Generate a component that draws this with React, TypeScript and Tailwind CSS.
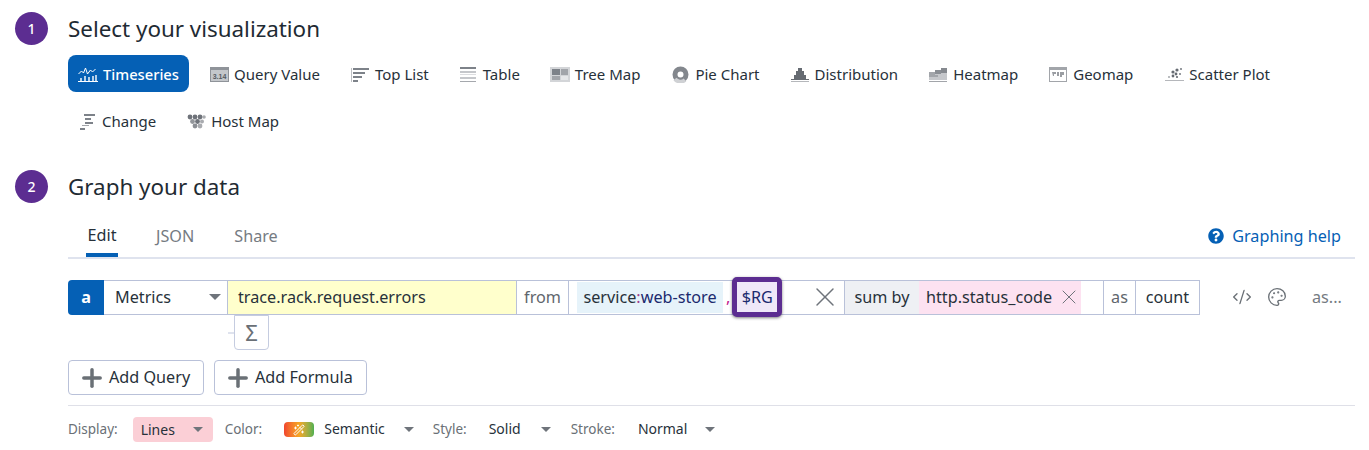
import { Plus, X, CodeXml, Palette, WandSparkles } from "lucide-react";
import { FaQuestionCircle } from "react-icons/fa";

const gray = "#7d8289";

function TimeseriesIcon() {
  return (
    <svg width="20" height="15" viewBox="0 0 20 15" fill="none">
      <path d="M0.5 7l3-3 2 2 2-5 2 6 3-4 2 2 3-3" stroke="currentColor" strokeWidth="1" />
      <path d="M0 14.5h20" stroke="currentColor" strokeWidth="1" />
      <path d="M2 11h2v3H2zM6 9h2v5H6zM10 10h2v4h-2zM14 9h2v5h-2zM17 8h2v6h-2z" fill="currentColor" opacity="0.7" />
    </svg>
  );
}

function QueryValueIcon() {
  return (
    <svg width="19" height="15" viewBox="0 0 19 15">
      <rect width="19" height="15" fill="#8f9399" />
      <rect x="1" y="3" width="17" height="11" fill="#c4c7cb" />
      <text x="9.5" y="12" textAnchor="middle" fontSize="7" fontWeight="700" fill="#555b62" fontFamily="Liberation Sans, sans-serif">3.14</text>
    </svg>
  );
}

function TopListIcon() {
  return (
    <svg width="18" height="14" viewBox="0 0 18 14" fill={gray}>
      <rect x="2" y="0" width="16" height="2" />
      <rect x="2" y="4" width="12" height="2" />
      <rect x="2" y="8" width="9" height="2" />
      <rect x="2" y="12" width="5" height="2" />
      <rect x="0" y="0" width="1" height="14" opacity="0.5" />
    </svg>
  );
}

function TableIcon() {
  return (
    <svg width="16" height="16" viewBox="0 0 16 16" fill="#c5c7cb">
      <rect y="0" width="16" height="2" fill="#7d8289" />
      <rect y="4" width="16" height="2" />
      <rect y="7" width="16" height="1" opacity="0.6" />
      <rect y="10" width="16" height="2" />
      <rect y="14" width="16" height="1" fill="#a5a8ad" />
    </svg>
  );
}

function TreeMapIcon() {
  return (
    <svg width="20" height="15" viewBox="0 0 20 15">
      <rect width="20" height="15" fill="#d3d5d8" />
      <rect x="2" y="2" width="8" height="6" fill="#7d8289" />
      <rect x="11" y="2" width="7" height="6" fill="#a2a5aa" />
      <rect x="2" y="9" width="8" height="4" fill="#a2a5aa" />
      <rect x="11" y="9" width="7" height="4" fill="#e6e7e9" />
    </svg>
  );
}

function PieIcon() {
  return (
    <svg width="17" height="17" viewBox="0 0 17 17" fill="none">
      <circle cx="8.5" cy="8.5" r="5.5" stroke="#83878d" strokeWidth="5" />
      <path d="M13 14A7 7 0 0 1 3 13" stroke="#cfd1d4" strokeWidth="4" />
    </svg>
  );
}

function DistributionIcon() {
  return (
    <svg width="18" height="15" viewBox="0 0 18 15" fill="#666b72">
      <path d="M7 1h4v3h2v4h2v4h3v1H0v-1h3V8h2V4h2z" />
      <rect y="14" width="18" height="1" fill="#b5b7bb" />
    </svg>
  );
}

function HeatmapIcon() {
  return (
    <svg width="18" height="15" viewBox="0 0 18 15">
      <rect y="6" width="18" height="7" fill="#c5c7cb" />
      <rect x="0" y="5" width="6" height="3" fill="#a2a5aa" />
      <rect x="6" y="3" width="6" height="4" fill="#8a8e94" />
      <rect x="12" y="1" width="6" height="5" fill="#85898f" />
      <rect y="8" width="9" height="2" fill="#a2a5aa" />
      <rect y="14" width="18" height="1" fill="#a2a5aa" />
    </svg>
  );
}

function GeomapIcon() {
  return (
    <svg width="18" height="15" viewBox="0 0 18 15">
      <rect x="0.5" y="0.5" width="17" height="14" fill="#fff" stroke="#a2a5aa" />
      <rect x="1" y="1" width="16" height="2" fill="#a2a5aa" />
      <path d="M3 5h4v2H5v2H4zM8 5h2v4H8zM11 5h4v3h-2v2h-2z" fill="#9a9da2" />
    </svg>
  );
}

function ScatterIcon() {
  return (
    <svg width="19" height="15" viewBox="0 0 19 15" fill="#666b72">
      <circle cx="4" cy="10" r="1" opacity="0.6" />
      <circle cx="8" cy="5" r="1.6" />
      <circle cx="8" cy="9" r="1.4" />
      <circle cx="11" cy="7" r="1.4" />
      <circle cx="12" cy="3" r="1.6" />
      <circle cx="12" cy="10" r="1.1" />
      <circle cx="16" cy="2" r="0.9" />
      <circle cx="15" cy="7" r="0.9" />
      <rect y="13" width="19" height="1" fill="#b5b7bb" />
    </svg>
  );
}

function ChangeIcon() {
  return (
    <svg width="16" height="16" viewBox="0 0 16 16" fill={gray}>
      <rect x="5" y="0" width="11" height="2" />
      <rect x="6" y="4" width="6" height="2" />
      <rect x="6" y="8" width="8" height="2" />
      <rect x="3" y="11" width="7" height="1" opacity="0.7" />
      <rect x="1" y="14" width="5" height="2" />
    </svg>
  );
}

function HostMapIcon() {
  return (
    <svg width="19" height="15" viewBox="0 0 19 15" fill="#6f737a">
      <circle cx="3" cy="3" r="2.4" />
      <circle cx="8" cy="3" r="2.4" />
      <circle cx="13" cy="3" r="2.4" />
      <circle cx="17" cy="3" r="1.8" opacity="0.6" />
      <circle cx="5.5" cy="7.5" r="2.4" opacity="0.75" />
      <circle cx="10.5" cy="7.5" r="2.4" />
      <circle cx="15" cy="7.5" r="2" opacity="0.6" />
      <circle cx="8" cy="12" r="2.4" opacity="0.8" />
      <circle cx="13" cy="12" r="2.4" opacity="0.6" />
    </svg>
  );
}

function Caret({ className = "" }: { className?: string }) {
  return <span className={`h-0 w-0 border-x-[5px] border-t-[5px] border-x-transparent border-t-[#6f747b] ${className}`} />;
}

function VizItem({ icon, label, className }: { icon: React.ReactNode; label: string; className: string }) {
  return (
    <div className={`flex h-[37px] items-center gap-[5px] ${className}`}>
      <span className="flex w-[20px] justify-center">{icon}</span>
      <span>{label}</span>
    </div>
  );
}

function StepHeader({ n, title }: { n: number; title: string }) {
  return (
    <div className="flex items-center gap-[20px]">
      <div className="flex h-[33px] w-[33px] items-center justify-center rounded-full bg-[#5c2d91] text-[14px] font-medium text-white">
        {n}
      </div>
      <h2 className="text-[22.4px] leading-[33px] text-[#1f2b33]">{title}</h2>
    </div>
  );
}

export default function App() {
  return (
    <main
      className="h-[450px] w-[1369px] overflow-hidden bg-white pl-[15px] pt-[12px] text-[15px] text-[#27313a]"
      style={{ fontFamily: '"Noto Sans", sans-serif' }}
    >
      <StepHeader n={1} title="Select your visualization" />

      <div className="ml-[53px] mt-[10px] flex flex-wrap">
        <div className="flex h-[37px] w-[121px] items-center justify-center gap-[5px] rounded-[8px] bg-[#0560b5] pt-[1px] text-[14.7px] font-medium text-white">
          <TimeseriesIcon />
          <span>Timeseries</span>
        </div>
        <VizItem icon={<QueryValueIcon />} label="Query Value" className="ml-[20px] pt-[2px]" />
        <VizItem icon={<TopListIcon />} label="Top List" className="ml-[30px] pt-[2px]" />
        <VizItem icon={<TableIcon />} label="Table" className="ml-[29px] pt-[2px]" />
        <VizItem icon={<TreeMapIcon />} label="Tree Map" className="ml-[30px] pt-[2px]" />
        <VizItem icon={<PieIcon />} label="Pie Chart" className="ml-[30px] pt-[2px]" />
        <VizItem icon={<DistributionIcon />} label="Distribution" className="ml-[30px] pt-[2px]" />
        <VizItem icon={<HeatmapIcon />} label="Heatmap" className="ml-[30px] pt-[2px]" />
        <VizItem icon={<GeomapIcon />} label="Geomap" className="ml-[30px] pt-[2px]" />
        <VizItem icon={<ScatterIcon />} label="Scatter Plot" className="ml-[31px] pt-[2px]" />
      </div>
      <div className="ml-[62px] mt-[11px] flex">
        <VizItem icon={<ChangeIcon />} label="Change" className="" />
        <VizItem icon={<HostMapIcon />} label="Host Map" className="ml-[30px]" />
      </div>

      <div className="mt-[30px]">
        <StepHeader n={2} title="Graph your data" />
      </div>

      {/* tabs */}
      <div className="ml-[53px] mt-[14px] flex h-[42px] w-[1287px] items-start border-b-2 border-[#dfe3ee] text-[16.2px]">
        <div className="ml-[18px] flex h-[40px] w-[32px] items-center justify-center border-b-4 border-[#0560b5] pt-[1px]">
          Edit
        </div>
        <div className="ml-[38px] flex h-[37px] items-center pt-[1px] text-[#757b82]">JSON</div>
        <div className="ml-[40px] flex h-[37px] items-center pt-[1px] text-[#757b82]">Share</div>
        <a className="ml-auto mr-[14px] flex h-[37px] items-center gap-[8px] pt-[1px] text-[#0560b5]">
          <FaQuestionCircle size={16} />
          Graphing help
        </a>
      </div>

      {/* query row */}
      <div className="ml-[53px] mt-[21px] flex h-[35px] w-[1287px] items-stretch text-[16.2px] [&>div]:pb-[1px]">
        <div className="flex w-[36px] items-center justify-center rounded-l-[4px] bg-[#0560b5] font-bold text-white">a</div>
        <div className="flex w-[124px] items-center justify-between border-y border-r border-[#b9c1d9] pl-[11px] pr-[6px]">
          Metrics
          <Caret className="border-x-[6px] border-t-[6px]" />
        </div>
        <div className="flex w-[288px] items-center border-y border-[#b9c1d9] bg-[#ffffcc] pl-[10px]">trace.rack.request.errors</div>
        <div className="flex w-[53px] items-center justify-center border border-[#b9c1d9] text-[#5f666d]">from</div>
        <div className="flex w-[275px] items-center border-y border-[#b9c1d9] pl-[8px]">
          <span className="flex h-[31px] w-[146px] items-center justify-center bg-[#e6f3fa] text-[#1b2a6e]">
            <span className="text-[#27313a]">service</span>
            <span className="text-[#a0408f]">:</span>web-store
          </span>
          <span className="ml-[3px] text-[#c2188b]">,</span>
          <span className="relative z-10 ml-[2px] flex h-[40px] w-[50px] shrink-0 items-center justify-center rounded-[5px] border-[5px] border-[#5c2d91] bg-[#efe8f8] text-[#1b2a6e] shadow-[0_1px_3px_rgba(0,0,0,0.5)]">
            $RG
          </span>
          <X size={32} className="ml-[27px] shrink-0 text-[#6f747b]" strokeWidth={1.1} />
        </div>
        <div className="flex w-[75px] items-center justify-center border-y border-l border-[#b9c1d9] bg-[#eef0f4]">sum by</div>
        <div className="flex w-[184px] items-center border-y border-[#b9c1d9] !pb-0">
          <span className="flex h-full w-[162px] items-center justify-between bg-[#fde2f1] pb-[1px] pl-[7px]">
            http.status_code
            <X size={24} className="shrink-0 text-[#6f747b]" strokeWidth={1} />
          </span>
        </div>
        <div className="flex w-[33px] items-center justify-center border border-[#b9c1d9] text-[#5f666d]">as</div>
        <div className="flex w-[64px] items-center justify-center border-y border-r border-[#b9c1d9]">count</div>
        <div className="ml-[32px] flex items-center gap-[15px] text-[#6a7076]">
          <CodeXml size={20} strokeWidth={1.6} />
          <Palette size={20} strokeWidth={1.6} />
        </div>
        <div className="ml-[25px] flex items-center text-[#757b82]">as...</div>
      </div>

      {/* sum icon */}
      <div className="ml-[213px] flex items-center">
        <span className="h-[2px] w-[6px] bg-[#dfe3ee]" />
        <div className="flex h-[35px] w-[35px] items-center justify-center rounded-b-[4px] border border-[#c5cce0] bg-white text-[22px] text-[#6a7076]">
          Σ
        </div>
      </div>

      <div className="ml-[53px] mt-[10px] flex gap-[10px] text-[16.2px]">
        <button className="flex h-[35px] w-[136px] items-center gap-[3px] rounded-[4px] border border-[#b9c1d9] pl-[9px]">
          <Plus size={28} strokeWidth={3} className="text-[#6a7076]" />
          Add Query
        </button>
        <button className="flex h-[35px] w-[153px] items-center gap-[3px] rounded-[4px] border border-[#b9c1d9] pl-[9px]">
          <Plus size={28} strokeWidth={3} className="text-[#6a7076]" />
          Add Formula
        </button>
      </div>

      <div className="ml-[53px] mt-[10px] h-px w-[1287px] bg-[#dfe0e8]" />

      {/* display options */}
      <div className="ml-[53px] mt-[11px] flex h-[25px] items-center text-[14px]">
        <span className="text-[13.5px] text-[#6a7076]">Display:</span>
        <div className="ml-[15px] flex h-[25px] w-[80px] items-center justify-between rounded-[4px] bg-[#fbcfd6] pl-[8px] pr-[10px]">
          Lines
          <Caret />
        </div>
        <span className="ml-[12px] text-[13.5px] text-[#6a7076]">Color:</span>
        <span className="ml-[22px] flex h-[15px] w-[30px] items-center justify-center rounded-[4px] bg-gradient-to-r from-[#f0442e] via-[#f5a623] to-[#4caf50]">
          <WandSparkles size={12} className="text-white" />
        </span>
        <span className="ml-[10px] -translate-y-[1px]">Semantic</span>
        <Caret className="ml-[19px]" />
        <span className="ml-[19px] text-[13.5px] text-[#6a7076]">Style:</span>
        <span className="ml-[22px] -translate-y-[1px]">Solid</span>
        <Caret className="ml-[20px]" />
        <span className="ml-[20px] text-[13.5px] text-[#6a7076]">Stroke:</span>
        <span className="ml-[23px] -translate-y-[1px]">Normal</span>
        <Caret className="ml-[18px]" />
      </div>
    </main>
  );
}
